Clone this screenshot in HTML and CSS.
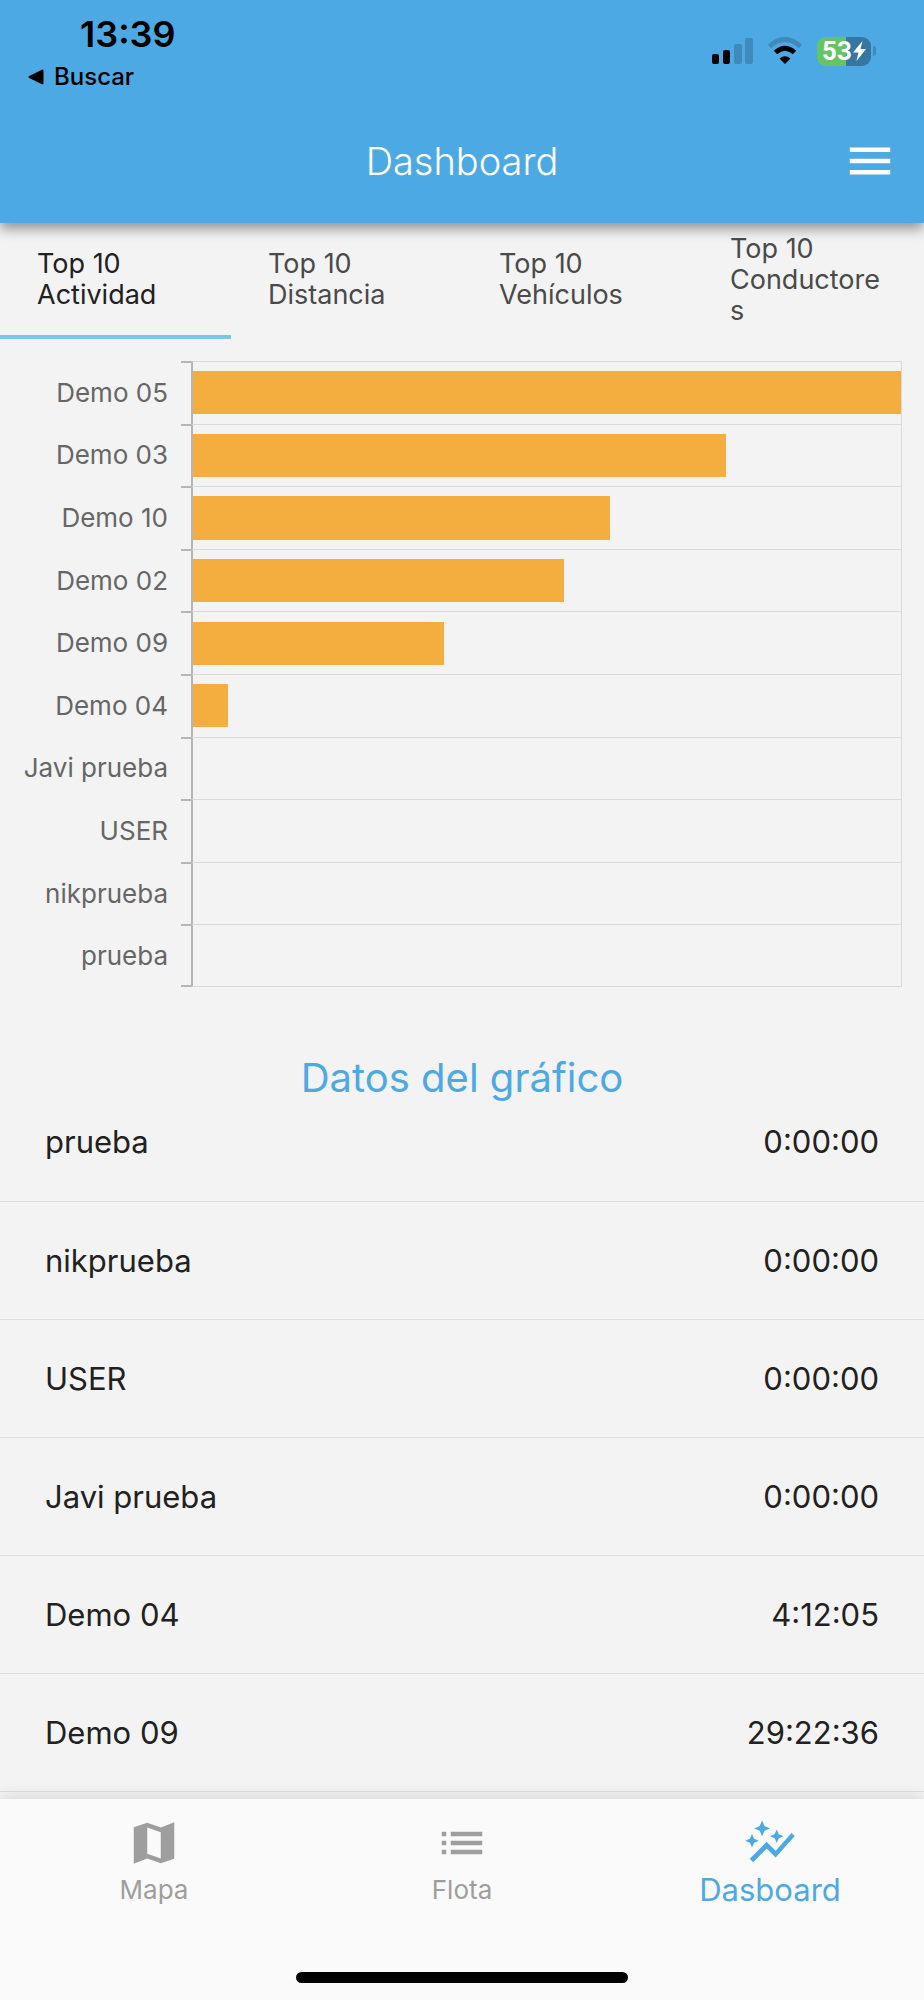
FILE: index.html
```html
<!DOCTYPE html>
<html lang="es">
<head>
  <meta charset="UTF-8">
  <meta name="viewport" content="width=device-width, initial-scale=1.0">
  <title>Dashboard</title>
  <link rel="stylesheet" href="styles.css">
</head>
<body>

  <header class="header">
    <div class="status-bar">
      <div class="status-left">
        <span class="clock">13:39</span>
        <a class="back" href="#">
          <svg width="16" height="16" viewBox="0 0 16 16" aria-hidden="true"><path d="M1.2 7.1 14 .7q1.5-.5 1.5 1v12.6q0 1.5-1.5 1L1.2 8.9q-1.4-.9 0-1.8z"/></svg>
          Buscar
        </a>
      </div>
      <div class="status-right">
        <svg width="42" height="28" viewBox="0 0 42 28" aria-hidden="true">
          <rect x="1" y="17" width="7" height="10" rx="2"/>
          <rect x="12" y="13" width="7" height="14" rx="2"/>
          <rect x="23" y="7" width="8" height="20" rx="2" fill="#3f8aba"/>
          <rect x="34" y="1" width="8" height="26" rx="2" fill="#3f8aba"/>
        </svg>
        <svg width="36" height="28" viewBox="0 0 36 28" aria-hidden="true">
          <path d="M2.5 9.5Q18-4.5 33.5 9.5" fill="none" stroke="#3f8aba" stroke-width="5"/>
          <path d="M8.5 15.5q9.5-8.5 19 0" fill="none" stroke="#000" stroke-width="5"/>
          <path d="M12.5 21.5q5.5-4.5 11 0L18 27z"/>
        </svg>
        <div class="battery">
          <span class="battery-level">53<svg width="13" height="20" viewBox="0 0 13 20" aria-hidden="true"><path d="M9.5 0 0 11.5h5.5L3.5 20 13 8H7.5z" fill="#fff"/></svg></span>
          <span class="battery-tip"></span>
        </div>
      </div>
    </div>
    <div class="app-bar">
      <h1>Dashboard</h1>
      <button class="menu-button" type="button" aria-label="Menú">
        <svg width="54" height="54" viewBox="0 0 24 24" aria-hidden="true"><path d="M3 18h18v-2H3zm0-5h18v-2H3zm0-7v2h18V6z" fill="#fff"/></svg>
      </button>
    </div>
  </header>

  <div class="tabs" role="tablist">
    <button class="tab active" type="button" role="tab" aria-selected="true">Top 10 Actividad</button>
    <button class="tab" type="button" role="tab" aria-selected="false">Top 10 Distancia</button>
    <button class="tab" type="button" role="tab" aria-selected="false">Top 10 Vehículos</button>
    <button class="tab" type="button" role="tab" aria-selected="false">Top 10 Conductores</button>
  </div>

  <main class="content">
    <div class="chart">
      <div class="chart-row"><span class="chart-label">Demo 05</span><span class="tick"></span><div class="plot"><div class="bar" style="width: 100%"></div></div></div>
      <div class="chart-row"><span class="chart-label">Demo 03</span><span class="tick"></span><div class="plot"><div class="bar" style="width: 75.3%"></div></div></div>
      <div class="chart-row"><span class="chart-label">Demo 10</span><span class="tick"></span><div class="plot"><div class="bar" style="width: 58.9%"></div></div></div>
      <div class="chart-row"><span class="chart-label">Demo 02</span><span class="tick"></span><div class="plot"><div class="bar" style="width: 52.4%"></div></div></div>
      <div class="chart-row"><span class="chart-label">Demo 09</span><span class="tick"></span><div class="plot"><div class="bar" style="width: 35.5%"></div></div></div>
      <div class="chart-row"><span class="chart-label">Demo 04</span><span class="tick"></span><div class="plot"><div class="bar" style="width: 5%"></div></div></div>
      <div class="chart-row"><span class="chart-label">Javi prueba</span><span class="tick"></span><div class="plot"></div></div>
      <div class="chart-row"><span class="chart-label">USER</span><span class="tick"></span><div class="plot"></div></div>
      <div class="chart-row"><span class="chart-label">nikprueba</span><span class="tick"></span><div class="plot"></div></div>
      <div class="chart-row"><span class="chart-label">prueba</span><span class="tick"></span><div class="plot"></div></div>
    </div>

    <h2 id="data-title">Datos del gráfico</h2>
    <table class="data" aria-labelledby="data-title">
      <tbody>
        <tr><th scope="row">prueba</th><td>0:00:00</td></tr>
        <tr><th scope="row">nikprueba</th><td>0:00:00</td></tr>
        <tr><th scope="row">USER</th><td>0:00:00</td></tr>
        <tr><th scope="row">Javi prueba</th><td>0:00:00</td></tr>
        <tr><th scope="row">Demo 04</th><td>4:12:05</td></tr>
        <tr><th scope="row">Demo 09</th><td>29:22:36</td></tr>
      </tbody>
    </table>
  </main>

  <footer class="footer">
    <nav class="nav">
      <a class="nav-item" href="#">
        <svg width="54" height="54" viewBox="0 0 24 24" aria-hidden="true"><path d="M15 5.1 9 3 3 5.02v16.2l6-2.33 6 2.1 6-2.02V2.77zm0 13.79-6-2.11V5.11l6 2.11z"/></svg>
        Mapa
      </a>
      <a class="nav-item" href="#">
        <svg width="54" height="54" viewBox="0 0 24 24" aria-hidden="true"><path d="M3 13h2v-2H3zm0 4h2v-2H3zm0-8h2V7H3zm4 4h14v-2H7zm0 4h14v-2H7zM7 7v2h14V7z"/></svg>
        Flota
      </a>
      <a class="nav-item active" href="#" aria-current="page">
        <svg width="54" height="54" viewBox="0 0 24 24" aria-hidden="true"><path d="M14.06 9.94 12 9l2.06-.94L15 6l.94 2.06L18 9l-2.06.94L15 12zM4 14l.94-2.06L7 11l-2.06-.94L4 8l-.94 2.06L1 11l2.06.94zm4.5-5 1.09-2.41L12 5.5 9.59 4.41 8.5 2 7.41 4.41 5 5.5l2.41 1.09zm-4 11.5 6-6.01 4 4L23 8.93l-1.41-1.41-7.09 7.97-4-4L3 19z"/></svg>
        Dasboard
      </a>
    </nav>
    <div class="home-indicator"></div>
  </footer>

</body>
</html>
```
FILE: styles.css
```css
* {
  box-sizing: border-box;
}

body {
  display: flex;
  flex-direction: column;
  height: 100vh;
  margin: 0;
  font-family: Inter, "Noto Sans", sans-serif;
  background-color: #f3f3f3;
  color: #212121;
}

a {
  color: inherit;
  text-decoration: none;
}

button {
  margin: 0;
  border: 0;
  background: none;
  font: inherit;
  color: inherit;
}

/* Header */
.header {
  position: relative;
  background-color: #4da9e3;
  box-shadow: 0 6px 12px rgba(0, 0, 0, 0.4);
}

.status-bar {
  display: flex;
  justify-content: space-between;
  height: 98px;
  padding: 12px 48px 0 28px;
  color: #000;
}

.status-left {
  display: flex;
  flex-direction: column;
}

.clock {
  padding-left: 52px;
  font-size: 36px;
  font-weight: 600;
  line-height: 44px;
}

.back {
  display: flex;
  align-items: center;
  gap: 10px;
  font-size: 24px;
  font-weight: 500;
  line-height: 42px;
}

.status-right {
  display: flex;
  align-items: center;
  gap: 14px;
  height: 78px;
}

.battery {
  display: flex;
  align-items: center;
  gap: 2px;
}

.battery-level {
  display: flex;
  align-items: center;
  justify-content: center;
  gap: 1px;
  width: 54px;
  height: 29px;
  border-radius: 9px;
  background: linear-gradient(to right, #65c466 53%, #3577a0 53%);
  color: #fff;
  font-size: 26px;
  font-weight: 700;
  font-family: Roboto, sans-serif;
}

.battery-tip {
  width: 3px;
  height: 10px;
  border-radius: 0 3px 3px 0;
  background-color: #3f8aba;
}

.app-bar {
  display: grid;
  grid-template-columns: 1fr auto 1fr;
  align-items: center;
  height: 125px;
  padding: 0 27px;
  color: #fff;
}

.app-bar h1 {
  grid-column: 2;
  margin: 0;
  font-size: 38px;
  font-weight: 300;
}

.menu-button {
  display: flex;
  justify-self: end;
  padding: 0;
}

/* Tabs */
.tabs {
  display: grid;
  grid-template-columns: repeat(4, 1fr);
}

.tab {
  height: 116px;
  padding: 0 37px;
  border-bottom: 4px solid transparent;
  font-size: 27px;
  line-height: 31px;
  text-align: left;
  overflow-wrap: anywhere;
  color: #4a4a4a;
}

.tab.active {
  border-bottom-color: #7cc4e8;
  color: #212121;
}

/* Chart */
.content {
  flex: 1;
  min-height: 0;
  overflow: hidden;
}

.chart {
  display: grid;
  grid-template-rows: repeat(10, 1fr);
  height: 626px;
  margin-top: 22px;
  padding-right: 22px;
}

.chart-row {
  display: flex;
}

.chart-label {
  align-self: center;
  width: 168px;
  margin-right: 13px;
  font-size: 26px;
  text-align: right;
  color: #666;
}

.tick {
  width: 10px;
  border-top: 2px solid #b5b5b5;
}

.plot {
  display: flex;
  flex: 1;
  align-items: center;
  border: solid #dadada;
  border-width: 1px 1px 0 0;
  border-left: 2px solid #b5b5b5;
}

.chart-row:last-child .plot {
  border-bottom-width: 1px;
}

.chart-row:last-child .tick {
  border-bottom: 2px solid #b5b5b5;
}

.bar {
  height: 70%;
  background-color: #f3ae3f;
}

/* Data */
h2 {
  margin: 64px 0 0;
  font-size: 40px;
  font-weight: 400;
  line-height: 54px;
  text-align: center;
  color: #4da9e3;
}

/* first row tucks under the title */
.data {
  width: 100%;
  margin-top: -22px;
  border-collapse: collapse;
  font-size: 31px;
}

.data th,
.data td {
  height: 118px;
  padding: 0 45px;
  border-bottom: 1px solid #dedede;
  font-weight: 400;
}

.data th {
  text-align: left;
}

.data td {
  text-align: right;
}

/* Bottom navigation */
.footer {
  position: relative;
  padding: 17px 0;
  background-color: #fafafa;
  box-shadow: 0 0 16px rgba(0, 0, 0, 0.15);
}

.nav {
  display: grid;
  grid-template-columns: repeat(3, 1fr);
}

.nav-item {
  display: flex;
  flex-direction: column;
  align-items: center;
  font-size: 26px;
  line-height: 39px;
  color: #9e9e9e;
}

.nav-item.active {
  font-size: 31px;
  color: #4da9e3;
}

.nav-item svg {
  fill: currentColor;
}

.home-indicator {
  width: 36%;
  height: 11px;
  margin: 63px auto 0;
  border-radius: 6px;
  background-color: #000;
}
```
